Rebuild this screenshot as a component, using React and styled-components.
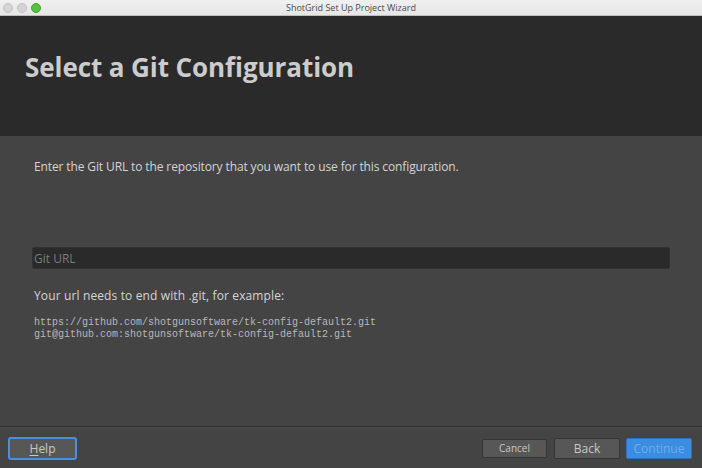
import React from "react";
import styled, { createGlobalStyle } from "styled-components";

const Global = createGlobalStyle`
  html, body { margin: 0; padding: 0; background: #444444; }
  body { font-family: "Open Sans", "Liberation Sans", sans-serif; }
  * { box-sizing: border-box; }
`;

const Window = styled.div`
  width: 702px;
  height: 468px;
  display: flex;
  flex-direction: column;
  background: #444444;
  overflow: hidden;
`;

const TitleBar = styled.div`
  height: 16px;
  flex: none;
  position: relative;
  display: flex;
  align-items: center;
  justify-content: center;
  background: linear-gradient(#f0f0f0, #e6e6e6);
  border-bottom: 1px solid #bdbdbd;
`;

const Lights = styled.div`
  position: absolute;
  left: 3px;
  top: 3px;
  display: flex;
  gap: 4px;
`;

const Light = styled.span`
  width: 10px;
  height: 10px;
  border-radius: 50%;
  background: ${(p) => p.$color};
  border: 0.5px solid ${(p) => p.$edge};
`;

const WindowTitle = styled.div`
  font-family: "Open Sans", "Liberation Sans", sans-serif;
  font-size: 9px;
  color: #4a4a4a;
  line-height: 16px;
`;

const Header = styled.div`
  height: 120px;
  flex: none;
  background: #2a2a2a;
  padding: 32px 0 0 25px;
`;

const PageTitle = styled.h1`
  margin: 0;
  font-family: "Open Sans", "Liberation Sans", sans-serif;
  font-weight: 700;
  font-size: 26px;
  line-height: 38px;
  color: #cccccc;
  letter-spacing: -0.08px;
`;

const Body = styled.div`
  flex: 1;
  display: flex;
  flex-direction: column;
  padding: 22px 32px 0 34px;
  border-bottom: 1px solid #2e2e2e;
`;

const Intro = styled.p`
  margin: 0;
  font-size: 12px;
  line-height: 17px;
  letter-spacing: -0.12px;
  color: #d4d4d4;
`;

const UrlInput = styled.input`
  margin: 72px 0 0 -2px;
  height: 22px;
  width: 638px;
  background: #2a2a2a;
  border: 1px solid #323232;
  border-radius: 2px;
  padding: 0 1px;
  font-family: "Open Sans", "Liberation Sans", sans-serif;
  font-size: 12px;
  color: #dddddd;
  outline: none;
  &::placeholder { color: #7a7a7a; }
`;

const Hint = styled.p`
  margin: 18px 0 0;
  font-size: 12px;
  line-height: 17px;
  letter-spacing: 0.13px;
  color: #d4d4d4;
`;

const Examples = styled.pre`
  margin: 13px 0 0;
  font-family: "Liberation Mono", "Courier New", monospace;
  font-size: 10px;
  line-height: 12px;
  color: #b8b8b8;
`;

const Footer = styled.div`
  height: 41px;
  flex: none;
  display: flex;
  align-items: center;
  padding: 0 10px 0 9px;
  border-top: 1px solid #4c4c4c;
`;

const Spacer = styled.div`
  flex: 1;
`;

const Button = styled.button`
  height: ${(p) => (p.$small ? "19px" : "21px")};
  width: ${(p) => p.$w}px;
  margin-left: ${(p) => p.$gap || 0}px;
  border-radius: 2px;
  font-family: "Open Sans", "Liberation Sans", sans-serif;
  font-size: ${(p) => (p.$small ? "10px" : "12px")};
  padding: 0;
  cursor: default;
  background: ${(p) => (p.$primary ? "#3a8de0" : "#575757")};
  color: ${(p) => (p.$primary ? "#73ace6" : "#c8c8c8")};
  border: 1px solid
    ${(p) => (p.$focus ? "#4a8fe0" : p.$primary ? "#2f72c0" : "#353535")};
  box-shadow: ${(p) => (p.$focus ? "0 0 0 1px #4a8fe0" : "none")};
  u { text-decoration-thickness: 1px; text-underline-offset: 2px; }
`;

export default function App() {
  return (
    <Window>
      <Global />
      <TitleBar>
        <Lights>
          <Light $color="#d4d4d4" $edge="#c2c2c2" />
          <Light $color="#d4d4d4" $edge="#c2c2c2" />
          <Light $color="#53c33e" $edge="#3ca62b" />
        </Lights>
        <WindowTitle>ShotGrid Set Up Project Wizard</WindowTitle>
      </TitleBar>
      <Header>
        <PageTitle>Select a Git Configuration</PageTitle>
      </Header>
      <Body>
        <Intro>
          Enter the Git URL to the repository that you want to use for this
          configuration.
        </Intro>
        <UrlInput placeholder="Git URL" />
        <Hint>Your url needs to end with .git, for example:</Hint>
        <Examples>
          {"https://github.com/shotgunsoftware/tk-config-default2.git\ngit@github.com:shotgunsoftware/tk-config-default2.git"}
        </Examples>
      </Body>
      <Footer>
        <Button $w={67} $focus>
          <u>H</u>elp
        </Button>
        <Spacer />
        <Button $w={65} $small $gap={0}>
          Cancel
        </Button>
        <Button $w={66} $gap={7}>
          Back
        </Button>
        <Button $w={66} $gap={6} $primary>
          Continue
        </Button>
      </Footer>
    </Window>
  );
}
